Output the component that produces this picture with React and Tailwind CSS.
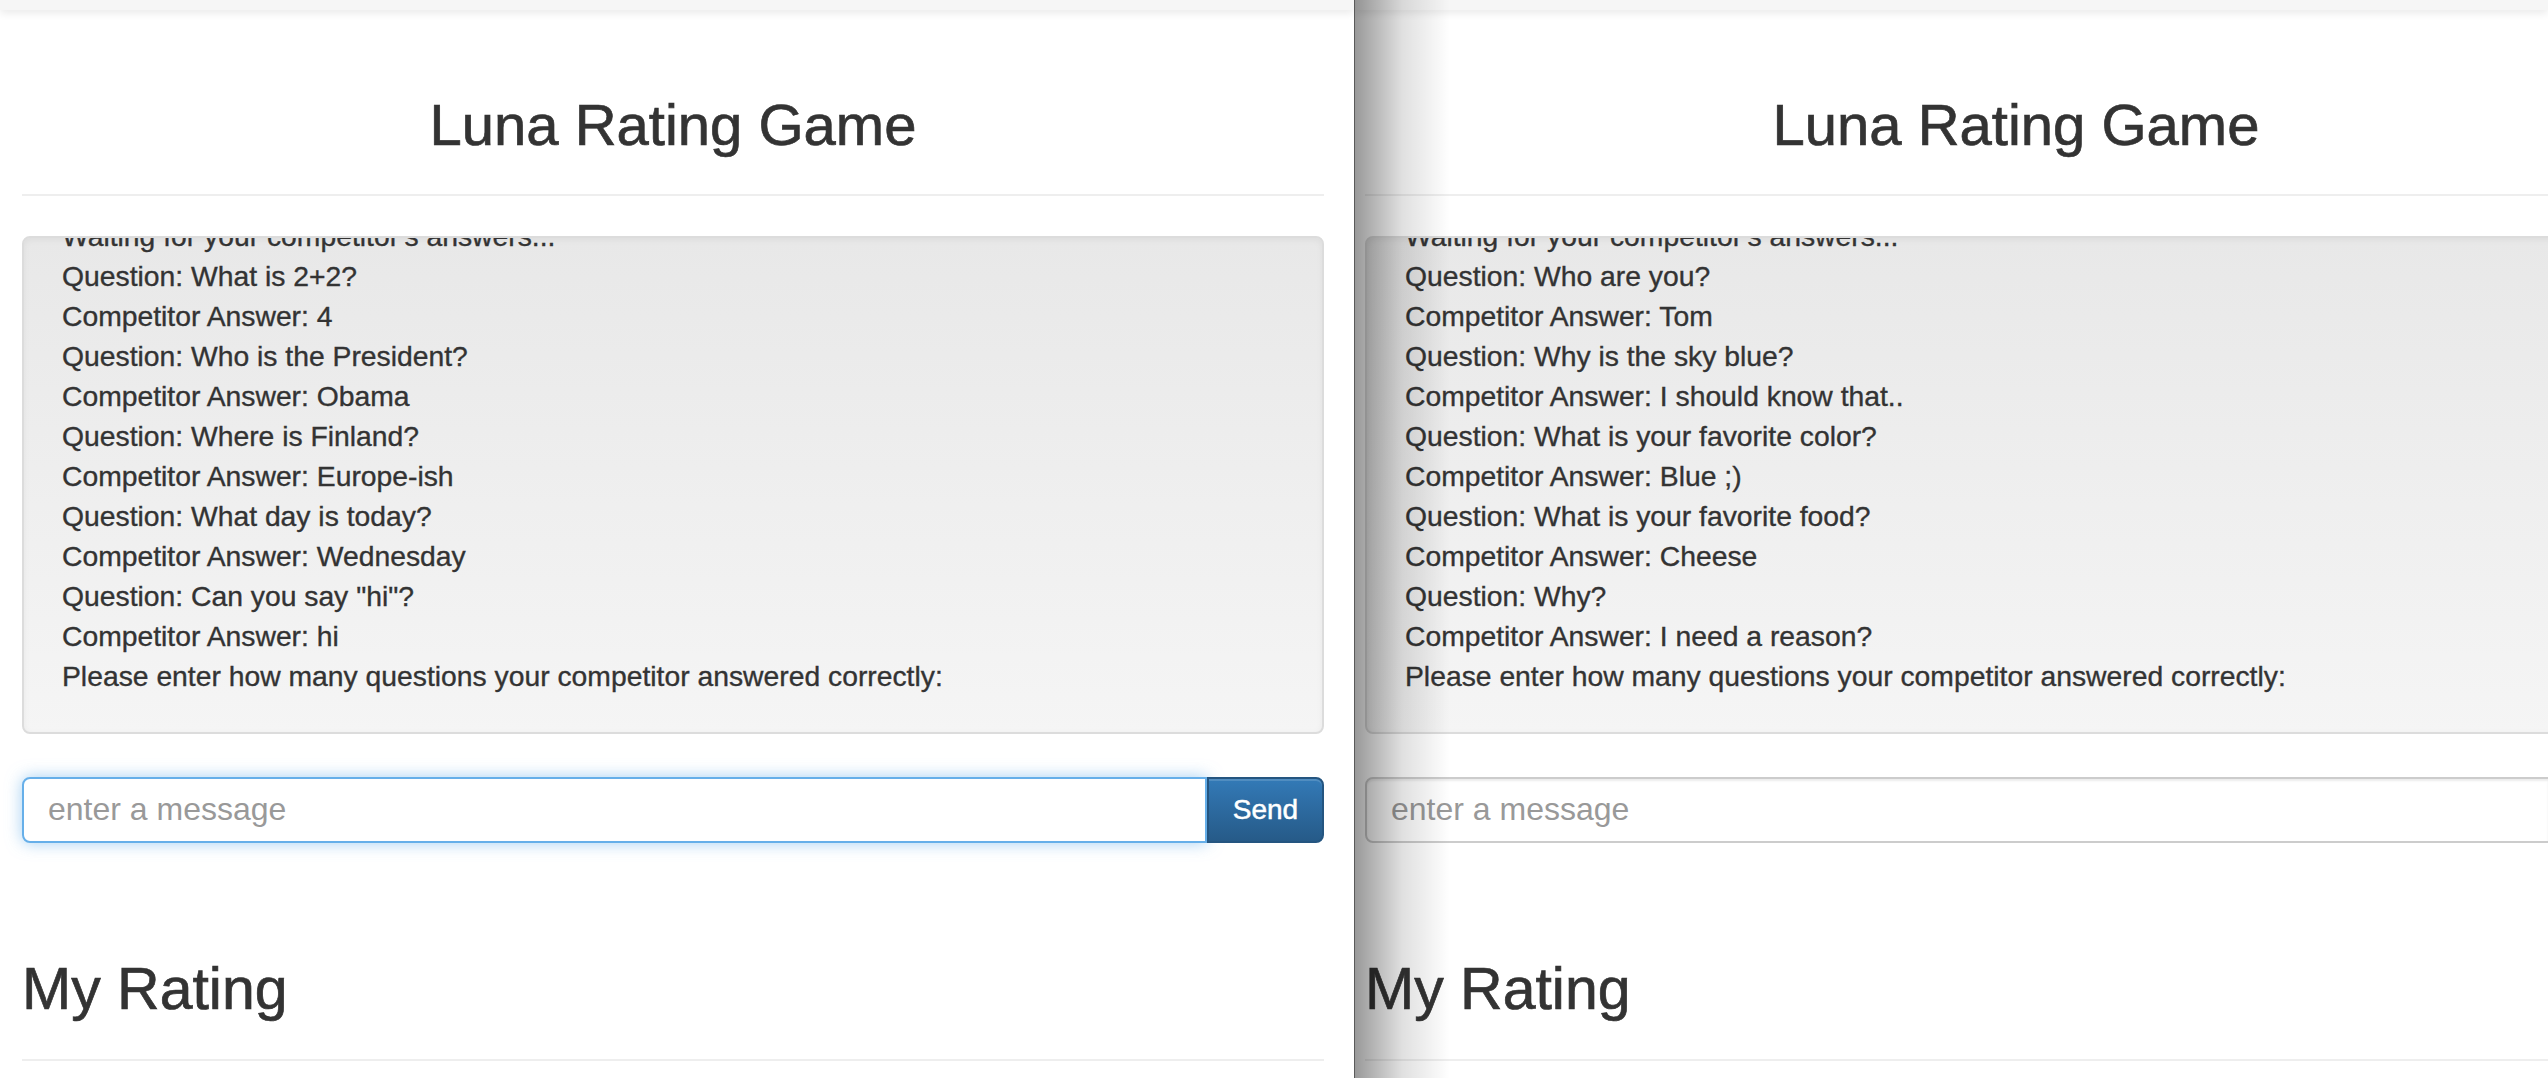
import React from 'react';

const leftLines = [
    'Waiting for your competitor\'s answers...',
    'Question: What is 2+2?',
    'Competitor Answer: 4',
    'Question: Who is the President?',
    'Competitor Answer: Obama',
    'Question: Where is Finland?',
    'Competitor Answer: Europe-ish',
    'Question: What day is today?',
    'Competitor Answer: Wednesday',
    'Question: Can you say "hi"?',
    'Competitor Answer: hi',
    'Please enter how many questions your competitor answered correctly:',
];

const rightLines = [
    'Waiting for your competitor\'s answers...',
    'Question: Who are you?',
    'Competitor Answer: Tom',
    'Question: Why is the sky blue?',
    'Competitor Answer: I should know that..',
    'Question: What is your favorite color?',
    'Competitor Answer: Blue ;)',
    'Question: What is your favorite food?',
    'Competitor Answer: Cheese',
    'Question: Why?',
    'Competitor Answer: I need a reason?',
    'Please enter how many questions your competitor answered correctly:',
];

function GamePane({ lines, focused, offset }) {
    return (
        <div className="flex flex-col">
            <div className="h-[10px] bg-[#f6f6f6] shadow-[0_3px_8px_rgba(0,0,0,0.09)]" />

            <div className={`w-[1302px] shrink-0 ${offset}`}>
                <h1 className="mt-[83px] text-center text-[58px] leading-[1.1] text-[#333] [-webkit-text-stroke:0.7px_#333]">Luna Rating Game</h1>
                <div className="mt-[37px] border-t-2 border-[#eee]" />

                <div className="mt-[40px] h-[498px] overflow-hidden rounded-[8px] border-2 border-[#dcdcdc] bg-linear-to-b from-[#e8e8e8] to-[#f5f5f5] shadow-[inset_0_2px_6px_rgba(0,0,0,0.05)]">
                    <div className="-mt-[22px] pl-[38px] text-[28.3px] leading-[40px] text-[#333] [-webkit-text-stroke:0.35px_#333]">
                        {lines.map((line, i) => (
                            <div key={i}>{line}</div>
                        ))}
                    </div>
                </div>

                <div className="mt-[43px] flex h-[66px]">
                    <input
                        type="text"
                        placeholder="enter a message"
                        className={`h-full flex-1 rounded-l-[8px] border-2 bg-white pl-[24px] text-[32px] text-[#555] outline-none placeholder:text-[#999] ${
                            focused
                                ? 'border-[#66afe9] shadow-[0_0_16px_rgba(102,175,233,0.6)]'
                                : 'border-[#ccc] shadow-[inset_0_2px_2px_rgba(0,0,0,0.075)]'
                        }`}
                    />
                    <button className="h-full w-[117px] rounded-r-[8px] border-2 border-[#245580] bg-linear-to-b from-[#337ab7] to-[#265a88] text-[28px] text-white shadow-[inset_0_2px_0_rgba(255,255,255,0.15)] [-webkit-text-stroke:0.5px_#fff]">
                        Send
                    </button>
                </div>

                <h1 className="mt-[114px] text-[59px] leading-[1.1] text-[#333] [-webkit-text-stroke:0.7px_#333]">My Rating</h1>
                <div className="mt-[37px] border-t-2 border-[#eee]" />
            </div>
        </div>
    );
}

export default function App() {
    return (
        <div className="flex h-[1078px] w-[2548px] overflow-hidden bg-white font-['Liberation_Sans',Arial,sans-serif]">
            <div className="w-[1354px] shrink-0 overflow-hidden">
                <GamePane lines={leftLines} focused offset="ml-[22px]" />
            </div>

            <div className="w-px shrink-0 bg-[#5a5a5a]" />

            <div className="relative flex-1 overflow-hidden">
                <GamePane lines={rightLines} offset="ml-[10px]" />
                <div className="pointer-events-none absolute inset-y-0 left-0 w-[95px] bg-linear-to-r from-[rgba(0,0,0,0.4)] via-[rgba(0,0,0,0.12)] to-transparent" />
            </div>
        </div>
    );
}
